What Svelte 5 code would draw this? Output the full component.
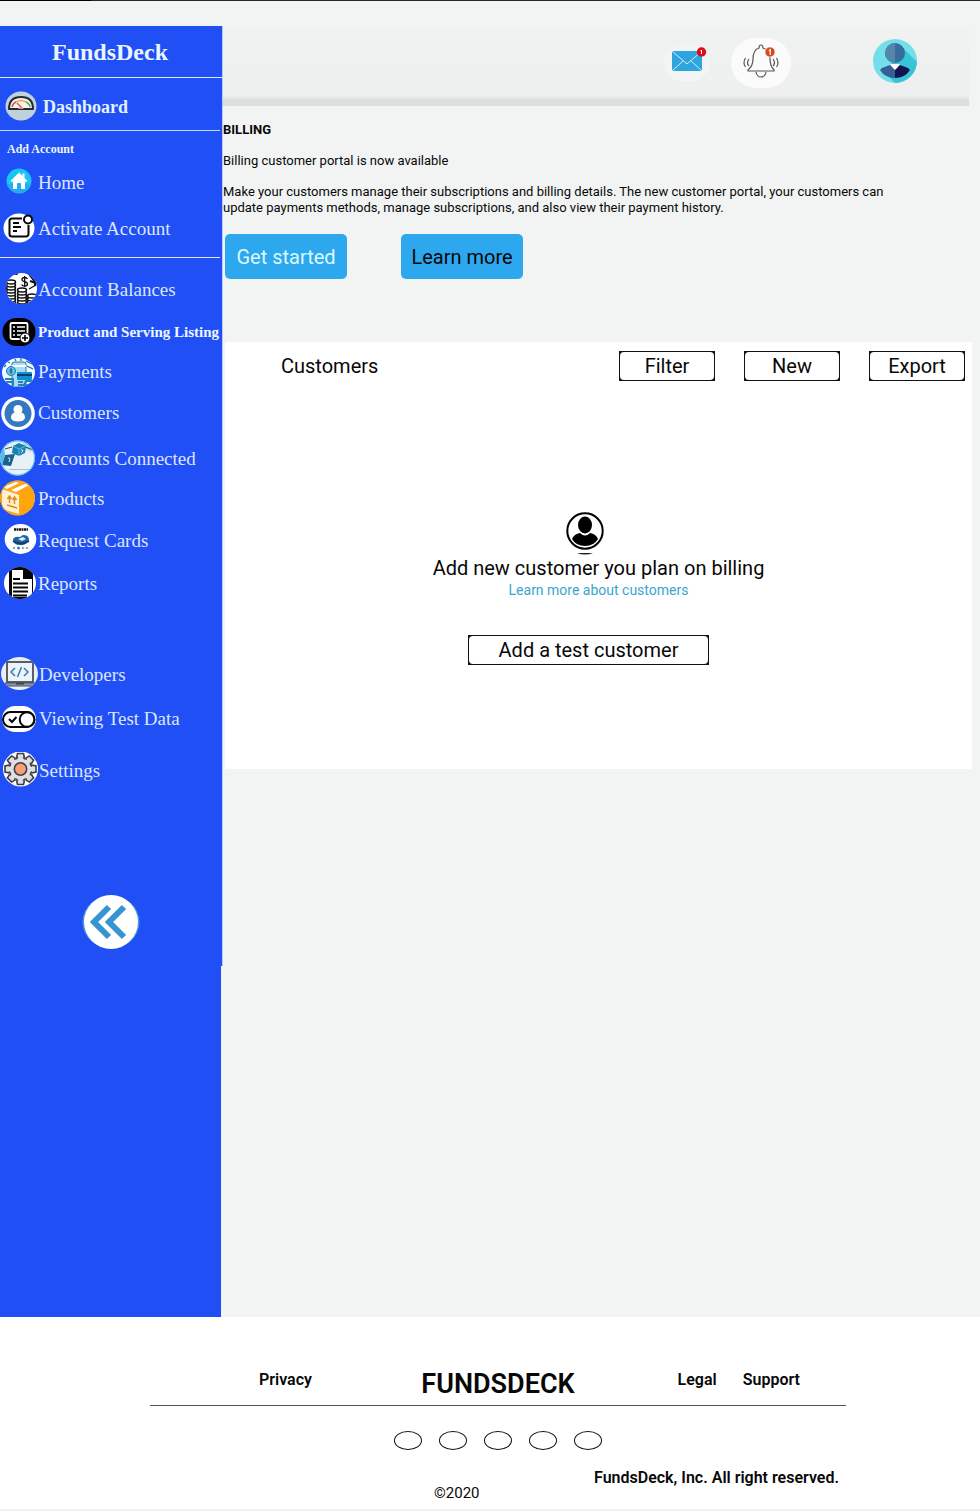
<script>
  const setup = [
    { icon: 'home', label: 'Home', height: 46 },
    { icon: 'activate', label: 'Activate Account', height: 46 }
  ];
  const accounts = [
    { icon: 'balances', label: 'Account Balances', height: 44 },
    { icon: 'listing', label: 'Product and Serving Listing', height: 40, current: true },
    { icon: 'payments', label: 'Payments', height: 40 },
    { icon: 'customers', label: 'Customers', height: 42 },
    { icon: 'connected', label: 'Accounts Connected', height: 50 },
    { icon: 'products', label: 'Products', height: 30 },
    { icon: 'request', label: 'Request Cards', height: 54 },
    { icon: 'reports', label: 'Reports', height: 32 }
  ];
  const tools = [
    { icon: 'developers', label: 'Developers', height: 44 },
    { icon: 'testdata', label: 'Viewing Test Data', height: 44 },
    { icon: 'settings', label: 'Settings', height: 60 }
  ];
  const teeth = [0, 45, 90, 135, 180, 225, 270, 315];
  const socials = ['Facebook', 'Twitter', 'Instagram', 'LinkedIn', 'YouTube'];
</script>

{#snippet glyph(name)}
  <svg class="glyph" viewBox="0 0 38 38" aria-hidden="true">
    <defs><clipPath id="clip-{name}">
      {#if name === 'balances'}<circle cx="21.500" cy="17.500" r="15.500" />
      {:else if name === 'payments'}<ellipse cx="18.500" cy="19.500" rx="16.500" ry="14.500" />
      {:else if name === 'developers'}<ellipse cx="19.500" cy="17.500" rx="18.500" ry="16.500" />
      {:else if name === 'reports'}<circle cx="20" cy="18" r="16" />
      {:else}<circle cx="17.500" cy="18" r="17.500" />{/if}
    </clipPath></defs>
    {#if name === 'home'}
      <circle cx="19" cy="17" r="12.500" fill="#18c6f4" />
      <path d="M7 20a12.500 12.500 0 0 0 24 0z" fill="#2a9bf0" opacity=".6" />
      <path d="M10.500 17 19 8.500l3.500 3.500V9.500h2V14l3 3-1.500 1-1-.8V25h-4v-6h-4v6h-4v-7.800l-1 .8z" fill="#fff" />
    {:else if name === 'activate'}
      <ellipse cx="19" cy="18" rx="15.500" ry="14.500" fill="#fff" />
      <path d="M22 8.500H12a2.500 2.500 0 0 0-2.500 2.500v13a2.500 2.500 0 0 0 2.500 2.500h14a2.500 2.500 0 0 0 2.500-2.500v-9M13 13h6M13 17h8M13 21h4" fill="none" stroke="#080808" stroke-width="2" />
      <circle cx="28" cy="9.500" r="4" fill="#fff" stroke="#080808" stroke-width="2" />
    {:else if name === 'balances'}
      <g clip-path="url(#clip-balances)">
        <rect width="38" height="38" fill="#fff" />
        <path d="M5 7q8-7 13-4M28 2l8 10-6-2M35 1v14M9 6q2-4 8-3" fill="none" stroke="#111" stroke-width="2" />
        <g fill="#fff" stroke="#090909" stroke-width="1.500">
          {#each [32, 29, 26, 23, 20, 17, 14, 11] as y}<ellipse cx="11" cy={y} rx="4.500" ry="2" />{/each}
          {#each [34, 31, 28, 25, 22, 19] as y}<ellipse cx="22" cy={y} rx="4.500" ry="2" />{/each}
          {#each [34, 31, 28, 25] as y}<ellipse cx="32" cy={y} rx="4.500" ry="2" />{/each}
        </g>
        <path d="M27.500 8q-1-1.500-3-1.500-2.500 0-2.500 2c0 3 5.500 1.500 5.500 4.500 0 3-5 2.500-5.800.5M24.700 5v11M29 18l7-4" fill="none" stroke="#111" stroke-width="1.300" />
      </g>
    {:else if name === 'listing'}
      <rect x="2.500" y="5" width="33" height="28" rx="14" fill="#000" />
      <rect x="10.500" y="10" width="17" height="16" rx="1.500" fill="none" stroke="#fff" stroke-width="1.800" />
      <path d="M13 14h2m2 0h8M13 18h2m2 0h8M13 22h2m2 0h4" stroke="#fff" stroke-width="1.600" />
      <circle cx="25" cy="25" r="5" fill="#fff" stroke="#000" />
      <path d="M25 22v6M22 25h6" stroke="#000" stroke-width="1.600" />
    {:else if name === 'payments'}
      <g clip-path="url(#clip-payments)">
        <rect width="38" height="38" fill="#f2faff" />
        <rect x="12" y="9" width="14" height="25" rx="2" fill="#a8ddf7" stroke="#2d7aa6" />
        <path d="M12 13h14" stroke="#fff" stroke-width="2" />
        <circle cx="11" cy="18" r="4.500" fill="#62c3eb" stroke="#197fb1" />
        <path d="M11 15v6M9.500 17h3M9.500 19h3" stroke="#136392" />
        <rect x="17" y="19" width="15" height="8" rx="1" fill="#1390d1" />
        <path d="M17 22h15" stroke="#093f70" stroke-width="2" />
        <path d="M5 26h8v7M26 28h9v4H24zM3 29h9M18 29h5M18 32h7" fill="none" stroke="#2185b8" stroke-width="2" />
        <path d="m4 14 2-2m2-3 2 1m5-4 1 2m5-3v3m5 0 6 3m-5 2 6 3" stroke="#25719b" stroke-width="1.300" />
      </g>
    {:else if name === 'customers'}
      <circle cx="18" cy="19.500" r="16.800" fill="#fff" />
      <circle cx="18" cy="19.500" r="13.500" fill="#3478c0" />
      <circle cx="18" cy="15.500" r="4.500" fill="#fff" />
      <path d="M11 24q0-5 4-5.500 3 2.500 6 0 4 .5 4 5.500-1 3.500-7 3.500T11 24z" fill="#fff" />
    {:else if name === 'connected'}
      <g clip-path="url(#clip-connected)">
        <rect width="38" height="38" fill="#e6f1f8" />
        <path d="M23 3l12 2v8l-11-4z" fill="#b5d8e7" />
        <path d="m13 6 6-3 7 3-1 7-6 3-7-3z" fill="#1681b3" />
        <path d="m13 6 6 3 7-3M19 9v7" fill="none" stroke="#63b9d9" />
        <path d="m5 15 10-1-4 12-9-1z" fill="#176491" />
        <path d="m0 11 4-3 1 7-3 10-2-3z" fill="#5eb7df" />
        <path d="m5 9 7-2M25 7l9 3" stroke="#33586c" fill="none" stroke-width="1.200" />
        <path d="M8 18q3-1 1 4M21 10h2q0 2-2 3" stroke="#d4f0fa" fill="none" />
        <path d="M9 29.500h22" stroke="#b2bfc8" />
      </g>
      <circle cx="17.500" cy="18" r="17" fill="none" stroke="#53bef4" />
    {:else if name === 'products'}
      <g clip-path="url(#clip-products)">
        <rect width="38" height="38" fill="#ffa51c" />
        <path d="m2 9 17 6v19L2 29z" fill="#fff1cf" />
        <path d="m3 7 13-5 3 1-12 6zM11 10l14-6 4 1-13 7z" fill="#fff" />
        <path d="m19 14 14-6v19l-14 7z" fill="#ffa60d" />
        <path d="M9.500 23v-6m-2 2 2-3 2 3m3 5v-6m-2 2 2-3 2 3M7 25l10 3" fill="none" stroke="#d98a1f" stroke-width="1.400" />
      </g>
      <circle cx="17.500" cy="18" r="17" fill="none" stroke="#f5a42a" />
    {:else if name === 'request'}
      <ellipse cx="20.500" cy="17" rx="15.800" ry="15" fill="#fff" />
      <path d="M14 7.500h14" stroke="#171717" stroke-width="2.500" stroke-dasharray="2 .5" />
      <path d="M13 17q2-3 7-2l3-2q6 0 6 5-3 6-9 5-7 0-7-6z" fill="#1c66a5" />
      <path d="m18 17 5-2 3 2-4 2z" fill="#dbf0fa" />
      <path d="M13 19q8 5 16 0" fill="none" stroke="#153e69" stroke-width="2" />
      <g fill="#9cacb9"><circle cx="14" cy="26" r="1.300" /><circle cx="18.500" cy="26" r="1.600" fill="#378ac0" /><circle cx="23" cy="26" r="1.300" /><circle cx="27" cy="26" r="1.300" /></g>
    {:else if name === 'reports'}
      <g clip-path="url(#clip-reports)">
        <rect width="38" height="38" fill="#fff" />
        <path d="M9 1h24v33H9z" fill="#050505" />
        <path d="M12 5h11v9h9v18H12z" fill="#fff" />
        <path d="m23 5 9 9h-9z" fill="#050505" />
        <path d="M13 14h7M13 18.500h15M13 22.500h15M13 26.500h15M13 30.500h14" stroke="#050505" stroke-width="2" />
      </g>
    {:else if name === 'developers'}
      <g clip-path="url(#clip-developers)">
        <rect width="38" height="38" fill="#e9eef5" />
        <rect x="7" y="6" width="26" height="20" fill="#eef3fa" stroke="#484f59" stroke-width="1.800" />
        <path d="M5 27h30l-2 3H7z" fill="#8d99a6" stroke="#485361" />
        <path d="M16 27h8v1.500h-8z" fill="#39434f" />
      </g>
      <path d="m15 12-4 4 4 4M24 12l4 4-4 4M21.500 11l-4 10" fill="none" stroke="#347fae" stroke-width="1.500" />
    {:else if name === 'testdata'}
      <rect x="2" y="6" width="34" height="26" rx="13" fill="#fff" />
      <rect x="3" y="12" width="31.500" height="15" rx="7.500" fill="#fff" stroke="#050505" stroke-width="2" />
      <circle cx="27" cy="19.500" r="7.300" fill="#fff" stroke="#050505" stroke-width="2" />
      <path d="m9 19 3 3 4.500-5" fill="none" stroke="#050505" stroke-width="2" />
    {:else if name === 'settings'}
      <circle cx="20.500" cy="17" r="17.500" fill="#fff" />
      {#each teeth as angle}<path transform="rotate({angle} 20.500 17)" d="m16.500 6 1-4.500h6l1 4.500" fill="#dedfe2" stroke="#3d3d44" stroke-width="1.600" />{/each}
      <circle cx="20.500" cy="17" r="12" fill="#dedfe2" />
      {#each teeth as angle}<path transform="rotate({angle + 22.5} 20.500 17)" d="M18.500 5.200q2 1.500 4 0" fill="none" stroke="#3d3d44" stroke-width="1.600" />{/each}
      <circle cx="20.500" cy="17" r="6.200" fill="#f4a177" stroke="#3d3d44" stroke-width="1.500" />
    {/if}
  </svg>
{/snippet}

{#snippet menu(items)}
  <ul>
    {#each items as item}
      <li>
        <a href="#{item.icon}" class:current={item.current} aria-current={item.current ? 'page' : undefined} style:height="{item.height}px">
          {@render glyph(item.icon)}<span>{item.label}</span>
        </a>
      </li>
    {/each}
  </ul>
{/snippet}

<div class="page">
  <div class="strip"><i></i></div>
  <div class="shell">
    <aside>
      <div class="side">
        <a class="brand" href="#top">FundsDeck</a>
        <nav aria-label="Main">
          <a class="dashboard" href="#dashboard">
            <svg class="gauge" viewBox="0 0 32 32" aria-hidden="true">
              <ellipse cx="16" cy="16" rx="15.500" ry="14.500" fill="#bfd2dc" />
              <path d="M4 19q0-12 12-12t12 12z" fill="#f8f5ee" stroke="#202a32" stroke-width="2" stroke-linejoin="round" />
              <path d="M7 17q1-4 4-5" fill="none" stroke="#e24e42" stroke-width="1.500" />
              <path d="M11 12q5-3 10 0" fill="none" stroke="#ee9d52" stroke-width="1.500" />
              <path d="M21 12q4 2 4 5" fill="none" stroke="#61a553" stroke-width="1.500" />
              <path d="m12 13 5 5" stroke="#e4594a" stroke-width="1.500" />
              <path d="M13 19q3-4 6 0" fill="#e98e7d" />
            </svg>
            <span>Dashboard</span>
          </a>
          <h2>Add Account</h2>
          <div class="setup">{@render menu(setup)}</div>
          <div class="accounts">{@render menu(accounts)}</div>
          <div class="tools">{@render menu(tools)}</div>
        </nav>
        <button class="collapse" aria-label="Collapse sidebar">
          <svg viewBox="0 0 58 54" aria-hidden="true">
            <ellipse cx="29" cy="27" rx="28.500" ry="26.500" fill="#4a98db" />
            <ellipse cx="29" cy="27" rx="27" ry="27" fill="#fff" />
            <path d="M27 12 12 27l15 15M42 12 27 27l15 15" fill="none" stroke="#3694d1" stroke-width="6" />
          </svg>
        </button>
      </div>
    </aside>

    <main>
      <header>
        <button class="alert" aria-label="Messages">
          <svg width="46" height="40" viewBox="0 0 46 40" aria-hidden="true">
            <ellipse cx="23" cy="20" rx="23" ry="19" fill="#f3f4f4" />
            <path d="M8 8h30v20H8z" fill="#2ea5de" />
            <path d="m8 8 15 13L38 8M8 28l11-10M38 28 27 18" fill="none" stroke="#d5eef9" />
            <circle cx="37.500" cy="9" r="4.700" fill="#d90f1b" />
            <path d="m36.500 8 1-1v4" fill="none" stroke="#fff" />
          </svg>
        </button>
        <button class="alert" aria-label="Notifications">
          <svg width="60" height="50" viewBox="0 0 60 50" aria-hidden="true">
            <rect width="60" height="50" rx="25" fill="#fbfbfb" />
            <path d="M28 10q0-3 2-3t2 3q7 2 7 11 0 7 4 11v1H17v-1q5-4 5-11 0-9 6-11z" fill="none" stroke="#555" stroke-width="1.200" />
            <path d="M25 34q1 5 5 5t5-5M18 21q-3 4 0 7M14.500 20q-3 5 0 9M42 21q3 4 0 7M45.500 20q3 5 0 9" fill="none" stroke="#555" stroke-width="1.200" />
            <circle cx="39" cy="14" r="5" fill="#d9481d" stroke="#fff" stroke-width=".6" />
            <path d="m38 13 1.200-1.200V17" fill="none" stroke="#fff" stroke-width="1.200" />
          </svg>
        </button>
        <button class="avatar" aria-label="Profile">
          <svg width="44" height="44" viewBox="0 0 44 44" aria-hidden="true">
            <defs><clipPath id="avatar"><circle cx="22" cy="22" r="22" /></clipPath></defs>
            <g clip-path="url(#avatar)">
              <path d="M0 0h44v44H0z" fill="#72dfea" />
              <path d="m29 8 15 15v21H22L12 34z" fill="#37c5d6" />
              <circle cx="22" cy="14" r="10" fill="#366d9d" />
              <path d="M22 4a10 10 0 0 0 0 20z" fill="#5387aa" />
              <path d="m17 25 5 8 5-8z" fill="#fff" />
              <path d="m17 26-8 3-2 2q5 8 15 8v-8z" fill="#365f96" />
              <path d="m27 26 8 3 2 2q-5 8-15 8v-8z" fill="#101552" />
            </g>
          </svg>
        </button>
      </header>

      <section class="intro">
        <h1>BILLING</h1>
        <p>Billing customer portal is now available</p>
        <p>Make your customers manage their subscriptions and billing details. The new customer portal, your customers can update payments methods, manage subscriptions, and also view their payment history.</p>
        <div class="actions">
          <button class="primary light">Get started</button>
          <button class="primary">Learn more</button>
        </div>
      </section>

      <section class="panel">
        <div class="toolbar">
          <h2>Customers</h2>
          <button class="outline"><span>Filter</span></button>
          <button class="outline"><span>New</span></button>
          <button class="outline"><span>Export</span></button>
        </div>
        <div class="empty">
          <svg class="person" width="38" height="44" viewBox="0 0 38 44" aria-hidden="true">
            <circle cx="19" cy="19" r="17.700" fill="#fff" stroke="#000" stroke-width="2" />
            <ellipse cx="19" cy="13" rx="7" ry="8.500" />
            <path d="M6 27q2-5 8-6 5 5 10 0 6 1 8 6-4 7-13 7T6 27z" />
            <path d="M11 41h16q-8 3-16 0z" fill="#18222d" />
          </svg>
          <p>Add new customer you plan on billing</p>
          <a href="#customers-help">Learn more about customers</a>
          <button class="outline wide"><span>Add a test customer</span></button>
        </div>
      </section>
    </main>
  </div>

  <footer>
    <div class="links">
      <a href="#privacy">Privacy</a>
      <strong>FUNDSDECK</strong>
      <div class="legal"><a href="#legal">Legal</a><a href="#support">Support</a></div>
    </div>
    <div class="socials">
      {#each socials as social}<a href="#{social}" aria-label={social}></a>{/each}
    </div>
    <div class="closing">
      <small>©2020</small>
      <b>FundsDeck, Inc. All right reserved.</b>
    </div>
  </footer>
</div>

<style>
  :global(body) { background: #f1f4f3; }
  * { box-sizing: border-box; }
  h1, h2, p, ul { margin: 0; padding: 0; font-weight: 400; }
  ul { list-style: none; }
  a { color: inherit; text-decoration: none; }
  button { padding: 0; border: 0; background: none; color: inherit; font: inherit; cursor: pointer; }
  svg { display: block; flex: none; }
  .page { min-height: 100vh; display: flex; flex-direction: column; font-family: Roboto, sans-serif; color: #080808; }
  .strip { height: 1px; background: #252728; margin-bottom: 25px; }
  .strip i { display: block; width: 91px; height: 1px; background: #000; }
  .shell { flex: 1; display: grid; grid-template-columns: 223px minmax(0, 1fr); }

  aside { background: #204ff5; border-right: 2px solid #f1f4f3; font-family: "Liberation Serif", serif; color: #dce6ff; }
  .side { min-height: 940px; margin-right: -2px; padding-bottom: 16px; background: #204ff5; border-right: 1px solid #b9c8f5; }
  .brand { height: 52px; display: flex; align-items: center; justify-content: center; padding: 2px 2px 0 0; font-size: 24px; font-weight: 700; color: #eaf5ff; border-bottom: 1px solid #e0e8ff; }
  .dashboard { height: 53px; margin-right: 2px; display: flex; align-items: center; gap: 6px; padding: 6px 0 0 5px; border-bottom: 1px solid #c3dcff; font-size: 18px; font-weight: 700; color: #e4f0ff; }
  .gauge { width: 32px; height: 32px; margin-bottom: 2px; }
  nav h2 { padding: 10px 0 0 7px; height: 29px; font-size: 12px; line-height: 16px; font-weight: 700; color: #eaf5ff; }
  .setup { height: 98px; margin-right: 2px; border-bottom: 1px solid #e0e8ff; }
  .accounts { padding-top: 10px; }
  .tools { padding-top: 53px; }
  li a { display: flex; align-items: center; font-size: 19px; white-space: nowrap; }
  li .current { font-size: 15px; font-weight: 700; color: #eef7ff; }
  .tools :global(li a) { gap: 1px; }
  .glyph { width: 38px; height: 38px; }
  .collapse { display: block; width: 58px; height: 54px; margin: 94px auto 0; }

  header { height: 80px; margin-right: 11px; padding: 0 52px 10px 0; display: flex; align-items: center; justify-content: flex-end; gap: 21px; background: linear-gradient(#f0f2f1, #eef0ef 70px, #dcdddd 74px); }
  .alert { margin-top: 4px; }
  .avatar { margin-left: 61px; }
  .intro { padding: 16px 60px 0 0; font-size: 13px; line-height: 16px; }
  .intro h1 { font-size: 13px; font-weight: 700; }
  .intro p { margin-top: 15px; }
  .actions { display: flex; gap: 54px; margin: 18px 0 0 2px; }
  .primary { width: 122px; height: 45px; border-radius: 5px; background: #2da7ee; font-size: 20px; }
  .light { color: #d9fbff; }
  .panel { min-height: 427px; margin: 63px 8px 0 2px; background: #fff; }
  .toolbar { display: grid; grid-template-columns: minmax(0, 1fr) repeat(3, 96px); gap: 29px; align-items: center; padding: 9px 7px 0 56px; }
  .toolbar h2 { font-size: 20px; line-height: 30px; }
  .outline { height: 30px; padding: 1px; background: #111; font-size: 20px; }
  .outline span { display: flex; height: 28px; align-items: center; justify-content: center; background: #fff; border-radius: 4px; }
  .empty { display: flex; flex-direction: column; align-items: center; padding-top: 131px; }
  .person { margin-right: 27px; }
  .empty p { font-size: 20px; line-height: 24px; }
  .empty a { font-size: 14px; line-height: 20px; color: #3ba5cf; }
  .wide { width: 241px; margin: 35px 20px 0 0; }

  footer { padding: 46px 134px 5px 150px; background: #fff; border-bottom: 2px solid #f1f1f1; font-size: 16px; }
  .links { display: grid; grid-template-columns: 1fr auto 1fr; height: 43px; border-bottom: 1px solid #555; font-weight: 600; }
  .links > a, .legal { line-height: 34px; }
  .links > a { padding-left: 109px; }
  .links strong { font-size: 27px; line-height: 42px; font-weight: 600; }
  .legal { display: flex; justify-content: flex-end; gap: 26px; padding-right: 46px; }
  .socials { display: flex; justify-content: center; gap: 17px; margin-top: 25px; }
  .socials a { width: 28px; height: 19px; border: 1px solid #111; border-radius: 50%; }
  .closing { display: flex; justify-content: space-between; align-items: flex-start; padding: 17px 7px 0 284px; }
  small { margin-top: 15px; font-size: 15px; line-height: 22px; }
  b { font-weight: 600; line-height: 22px; }
</style>
